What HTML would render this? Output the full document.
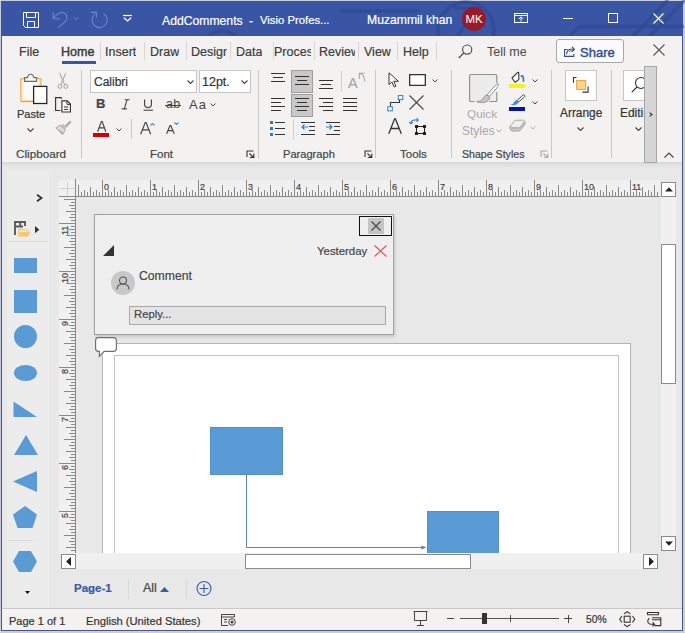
<!DOCTYPE html>
<html><head><meta charset="utf-8">
<style>
*{margin:0;padding:0;box-sizing:border-box}
html,body{width:685px;height:633px;overflow:hidden;background:#c9cde2}
body{font-family:"Liberation Sans",sans-serif;position:relative;color:#333}
.a{position:absolute}
.t{position:absolute;white-space:nowrap;line-height:1}
svg{position:absolute;overflow:visible}
.t,.gl{-webkit-text-stroke-width:0.2px}
.tab{position:absolute;top:45px;font-size:12.5px;color:#3c3c3c;-webkit-text-stroke:0.2px #3c3c3c;white-space:nowrap;overflow:hidden;line-height:14px}
.tsep{position:absolute;top:42px;width:1px;height:18px;background:#d6d6d6}
.gsep{position:absolute;top:70px;height:88px;width:1px;background:#c8c8c8}
.gl{position:absolute;top:148px;font-size:11.5px;color:#444;line-height:12px;white-space:nowrap}
</style></head>
<body>
<!-- window bg -->
<div class="a" style="left:1px;top:1px;width:682px;height:630px;background:#e8e8e8"></div>
<!-- TITLE BAR -->
<div class="a" style="left:1px;top:1px;width:682px;height:35px;background:#3955a3"></div>

<!-- title decorations (faint circuit) -->
<svg width="682" height="35" style="left:1px;top:1px" viewBox="1 1 682 35">
 <g fill="none" stroke="#2f4690" stroke-opacity="0.55" stroke-width="3.5">
  <circle cx="466" cy="30" r="28"/>
  <path d="M454 8 H476 L458 36"/>
  <path d="M340 11 H420"/>
  <path d="M570 36 L579 26.5 H684"/>
  <path d="M633 36 L668 0 M650 36 L685 0"/>
  <circle cx="222" cy="52" r="21"/>
 </g>
</svg>
<!-- save icon -->
<svg width="16" height="16" style="left:23px;top:12px" viewBox="0 0 16 16">
 <path d="M0.5 0.5 H15.5 V15.5 H2.5 L0.5 13.5 Z" fill="none" stroke="#fff" stroke-width="1"/>
 <path d="M3.5 0.5 V5.5 H12.5 V0.5" fill="none" stroke="#fff" stroke-width="1"/>
 <path d="M4.5 15.5 V9.5 H11.5 V15.5" fill="none" stroke="#fff" stroke-width="1"/>
</svg>
<!-- undo -->
<svg width="34" height="26" style="left:48px;top:6px" viewBox="0 0 34 26">
 <path d="M5.2 6 V12.7 H11.9" fill="none" stroke="#6f86cc" stroke-width="1.1"/>
 <path d="M5.8 12 C8.5 7.5 13 5.5 16.5 7 C19.5 8.5 19.5 12.5 17.5 15.5 L10.2 21.6" fill="none" stroke="#6f86cc" stroke-width="1.1"/>
 <path d="M25.8 11.4 L28.3 13.6 L30.8 11.4" fill="none" stroke="#6f86cc" stroke-width="1"/>
</svg>
<!-- redo -->
<svg width="30" height="26" style="left:85px;top:6px" viewBox="0 0 30 26">
 <path d="M18.4 7.4 A7.6 7.6 0 1 1 10.5 7.6" fill="none" stroke="#6f86cc" stroke-width="1.1"/>
 <path d="M6.1 6.4 H11.6 V11.6" fill="none" stroke="#6f86cc" stroke-width="1.1"/>
</svg>
<!-- customize qat -->
<svg width="9" height="7" style="left:123px;top:15px" viewBox="0 0 9 7">
 <path d="M0 0.5 H9" stroke="#fff" stroke-width="1.2"/>
 <path d="M0.8 2.8 L4.5 6 L8.2 2.8" fill="none" stroke="#fff" stroke-width="1.3"/>
</svg>
<div class="t" style="left:162px;top:15px;font-size:12.2px;color:#fff">AddComments</div><div class="t" style="left:249px;top:15px;font-size:12px;color:#fff">-</div><div class="t" style="left:260px;top:15px;font-size:11.3px;color:#fff">Visio Profes...</div>
<div class="t" style="left:367px;top:14px;font-size:12.2px;color:#fff">Muzammil khan</div>
<div class="a" style="left:462px;top:7px;width:24px;height:24px;border-radius:50%;background:#951b2c"></div>
<div class="t" style="left:463px;top:14px;font-size:11.5px;color:#fff;width:22px;text-align:center;-webkit-text-stroke-width:0">MK</div>
<!-- ribbon display options -->
<svg width="14" height="10" style="left:514px;top:13px" viewBox="0 0 14 10">
 <rect x="0.5" y="0.5" width="13" height="9" fill="none" stroke="#fff" stroke-width="1"/>
 <path d="M0.5 2.5 H13.5" stroke="#fff" stroke-width="1"/>
 <path d="M7 8.5 V4 M4.8 6 L7 3.8 L9.2 6" fill="none" stroke="#fff" stroke-width="1"/>
</svg>
<!-- min max close -->
<div class="a" style="left:563px;top:18px;width:10px;height:1px;background:#fff"></div>
<div class="a" style="left:608px;top:13px;width:10px;height:10px;border:1px solid #fff"></div>
<svg width="11" height="11" style="left:653px;top:13px" viewBox="0 0 11 11"><path d="M0.5 0.5 L10.5 10.5 M10.5 0.5 L0.5 10.5" stroke="#fff" stroke-width="1.1"/></svg>

<!-- RIBBON -->
<div class="a" style="left:2px;top:36px;width:680px;height:126px;background:#f3f2f1"></div>
<!-- ribbon shadow -->
<div class="a" style="left:2px;top:162px;width:680px;height:8px;background:linear-gradient(#d8d8d8,#e8e8e8 70%)"></div>

<!-- tabs -->
<div class="tab" style="left:19px">File</div>
<div class="tab" style="left:61px;width:35px;color:#3a3a3a;font-size:12.5px;-webkit-text-stroke:0.4px #3a3a3a">Home</div>
<div class="a" style="left:62px;top:61px;width:34px;height:3px;background:#3955a3"></div>
<div class="tsep" style="left:100px"></div>
<div class="tab" style="left:105px">Insert</div>
<div class="tsep" style="left:144px"></div>
<div class="tab" style="left:150px">Draw</div>
<div class="tsep" style="left:186px"></div>
<div class="tab" style="left:191px;width:36px">Design</div>
<div class="tsep" style="left:230px"></div>
<div class="tab" style="left:236px">Data</div>
<div class="tsep" style="left:273px"></div>
<div class="tab" style="left:274px;width:37px">Process</div>
<div class="tsep" style="left:314px"></div>
<div class="tab" style="left:319px;width:36px">Review</div>
<div class="tsep" style="left:358px"></div>
<div class="tab" style="left:364px">View</div>
<div class="tsep" style="left:397px"></div>
<div class="tab" style="left:403px">Help</div>
<div class="tsep" style="left:436px"></div>
<div class="tab" style="left:487px;color:#4a4a4a;-webkit-text-stroke-width:0">Tell me</div>


<!-- search / share / close -->
<svg width="15" height="15" style="left:458px;top:44px" viewBox="0 0 15 15">
 <circle cx="9.2" cy="5.6" r="4.6" fill="none" stroke="#444" stroke-width="1.1"/>
 <path d="M6 8.8 L0.8 14" stroke="#444" stroke-width="1.2"/>
</svg>
<div class="a" style="left:556px;top:39px;width:68px;height:24px;border:1px solid #a8a8a8;border-radius:3px;background:#fbfbfb"></div>
<svg width="12" height="12" style="left:564px;top:45px" viewBox="0 0 12 12"><path d="M3.5 4.5 H0.6 V11.4 H9.8 V9" fill="none" stroke="#2f4c8f" stroke-width="1.1"/><path d="M2.6 9.2 C2.8 6 4.8 4.3 7.6 4.3 H9.8 M8 1.8 L10.4 4.3 L8 6.8" fill="none" stroke="#2f4c8f" stroke-width="1.1"/><path d="M5 6.8 C5.8 6 7 5.8 9 5.8" fill="none" stroke="#2f4c8f" stroke-width="0.9"/></svg>
<div class="t" style="left:580px;top:46px;font-size:13px;color:#2f4c8f;-webkit-text-stroke-width:0.4px">Share</div>
<svg width="12" height="12" style="left:653px;top:44px" viewBox="0 0 12 12"><path d="M0.5 0.5 L11.5 11.5 M11.5 0.5 L0.5 11.5" stroke="#555" stroke-width="1.1"/></svg>

<!-- CLIPBOARD -->
<svg width="30" height="32" style="left:19px;top:73px" viewBox="0 0 30 32">
 <rect x="1.9" y="5.8" width="20" height="22.8" fill="#fbfaf8" stroke="#e3a23d" stroke-width="1.1"/>
 <rect x="3" y="6.9" width="17.8" height="20.6" fill="none" stroke="#fcd79a" stroke-width="1.1"/>
 <path d="M5.6 4.6 H8.6 C8.8 2.4 10 1.2 11.6 1.2 C13.2 1.2 14.5 2.4 14.8 4.6 H17.6 V8.4 H5.6 Z" fill="#fbfaf8" stroke="#6a6a6a" stroke-width="1.1"/>
 <rect x="14.6" y="13.4" width="13.2" height="17.1" fill="#fff" stroke="#222" stroke-width="1.25"/>
</svg>
<div class="t" style="left:17px;top:109px;font-size:11px;color:#333">Paste</div>
<svg width="7" height="4" style="left:27px;top:128px" viewBox="0 0 7 4"><path d="M0.5 0.5 L3.5 3.5 L6.5 0.5" fill="none" stroke="#444" stroke-width="1.1"/></svg>
<!-- scissors -->
<svg width="12" height="17" style="left:56px;top:72px" viewBox="0 0 12 17">
 <path d="M3.6 1 L8.6 12.6 M9.8 1 L4.8 12.6" stroke="#a8a8a8" stroke-width="1.1"/>
 <circle cx="4" cy="14.4" r="1.9" fill="none" stroke="#a8a8a8" stroke-width="1.1"/>
 <circle cx="9.8" cy="14.4" r="1.9" fill="none" stroke="#a8a8a8" stroke-width="1.1"/>
</svg>
<!-- copy -->
<svg width="18" height="17" style="left:54px;top:96px" viewBox="0 0 18 17">
 <path d="M6.5 14.5 H1.6 V1.6 H7 L8 2.6" fill="none" stroke="#333" stroke-width="1.15"/>
 <path d="M7.9 4.9 H13.2 L16.4 8.1 V16 H7.9 Z" fill="#fff" stroke="#333" stroke-width="1.15"/>
 <path d="M13 5 V8.4 H16.4" fill="none" stroke="#333" stroke-width="1"/>
 <path d="M10 11 H14.2 M10 13.4 H14.2" stroke="#333" stroke-width="1"/>
</svg>
<!-- format painter -->
<svg width="17" height="16" style="left:55px;top:120px" viewBox="0 0 17 16">
 <path d="M0.8 7.8 L5.5 5 L10.4 9.9 L7.6 14.6 Z" fill="#d9d9d9" stroke="#a8a8a8" stroke-width="1"/>
 <path d="M3 10 L8 12.5 M5 12.5 L8.5 12.8" stroke="#a8a8a8" stroke-width="0.8"/>
 <path d="M6.6 5.8 L9.6 8.8 L11 7.4 L8 4.4 Z" fill="#c8c8c8" stroke="#a8a8a8" stroke-width="0.9"/>
 <path d="M10.3 6 L14.6 1.7 C15.3 1 16.2 1.8 15.5 2.6 L11.2 6.9" fill="none" stroke="#a8a8a8" stroke-width="1.1"/>
</svg>

<!-- FONT -->
<div class="a" style="left:90px;top:70px;width:107px;height:23px;border:1px solid #c6c6c6;background:#fff"></div>
<div class="t" style="left:94px;top:76px;font-size:12px;color:#333">Calibri</div>
<svg width="7" height="4" style="left:187px;top:80px" viewBox="0 0 7 4"><path d="M0.5 0.5 L3.5 3.5 L6.5 0.5" fill="none" stroke="#444" stroke-width="1.1"/></svg>
<div class="a" style="left:199px;top:70px;width:52px;height:23px;border:1px solid #c6c6c6;background:#fff"></div>
<div class="t" style="left:202px;top:76px;font-size:12.5px;color:#333">12pt.</div>
<svg width="7" height="4" style="left:241px;top:80px" viewBox="0 0 7 4"><path d="M0.5 0.5 L3.5 3.5 L6.5 0.5" fill="none" stroke="#444" stroke-width="1.1"/></svg>
<div class="t" style="left:96px;top:97px;font-size:13px;font-weight:bold;color:#444">B</div>
<svg width="10" height="11" style="left:121px;top:99px" viewBox="0 0 10 11"><path d="M3.6 0.7 H8.6 M0.8 9.9 H5.8 M6.1 0.7 L3.3 9.9" fill="none" stroke="#444" stroke-width="1.1"/></svg>
<svg width="11" height="12" style="left:143px;top:99px" viewBox="0 0 11 12"><path d="M1.6 0.5 V5.6 C1.6 7.6 2.8 8.6 5 8.6 C7.2 8.6 8.4 7.6 8.4 5.6 V0.5" fill="none" stroke="#444" stroke-width="1.15"/><path d="M0.5 11.2 H10" stroke="#444" stroke-width="1.1"/></svg>
<div class="t" style="left:166px;top:98px;font-size:12.5px;color:#444;-webkit-text-stroke-width:0;letter-spacing:0.2px">ab</div><div class="a" style="left:165px;top:105px;width:16px;height:1px;background:#444"></div>
<div class="t" style="left:189px;top:98px;font-size:13px;color:#444;letter-spacing:1px;-webkit-text-stroke-width:0">Aa</div>
<svg width="6" height="4" style="left:210px;top:103px" viewBox="0 0 6 4"><path d="M0.5 0.5 L3 3 L5.5 0.5" fill="none" stroke="#444" stroke-width="1"/></svg>
<svg width="9.5" height="10.8" style="left:97px;top:121px" viewBox="0 0 9.5 10.8"><path d="M0.6 10.8 L4.35 0.5 H5.15 L8.9 10.8 M1.90 6.91 H7.60" fill="none" stroke="#444" stroke-width="1.15"/></svg>
<div class="a" style="left:93px;top:133px;width:16px;height:4px;background:#d00000"></div>
<svg width="6" height="4" style="left:116px;top:127.5px" viewBox="0 0 6 4"><path d="M0.5 0.5 L3 3 L5.5 0.5" fill="none" stroke="#444" stroke-width="1"/></svg>
<div class="a" style="left:131px;top:119px;width:1px;height:20px;background:#c8c8c8"></div>
<svg width="11.3" height="12.3" style="left:140px;top:121.5px" viewBox="0 0 11.3 12.3"><path d="M0.6 12.3 L5.25 0.5 H6.050000000000001 L10.700000000000001 12.3 M2.26 7.87 H9.04" fill="none" stroke="#444" stroke-width="1.15"/></svg>
<svg width="5" height="3" style="left:150px;top:122.5px" viewBox="0 0 5 3"><path d="M0.5 2.5 L2.5 0.5 L4.5 2.5" fill="none" stroke="#3d8fd1" stroke-width="1.1"/></svg>
<svg width="8.8" height="8.8" style="left:165.6px;top:125px" viewBox="0 0 8.8 8.8"><path d="M0.6 8.8 L4.0 0.5 H4.800000000000001 L8.200000000000001 8.8 M1.76 5.63 H7.04" fill="none" stroke="#444" stroke-width="1.15"/></svg>
<svg width="5" height="3" style="left:174px;top:122px" viewBox="0 0 5 3"><path d="M0.5 0.5 L2.5 2.5 L4.5 0.5" fill="none" stroke="#3d8fd1" stroke-width="1.1"/></svg>
<svg width="9" height="9" style="left:246px;top:150px" viewBox="0 0 9 9"><path d="M1 7 V1 H7.5" fill="none" stroke="#333" stroke-width="1.1"/><path d="M3.5 3.5 L7.5 7.5 M3.8 7.5 H7.8 V3.5" fill="none" stroke="#333" stroke-width="1.1"/></svg>


<!-- PARAGRAPH -->
<div class="a" style="left:291px;top:70px;width:22px;height:23px;border:1px solid #9e9e9e;background:#c8c8c8"></div><div class="a" style="left:291px;top:94px;width:22px;height:23px;border:1px solid #9e9e9e;background:#c8c8c8"></div><div class="a" style="left:271px;top:73px;width:14px;height:1px;background:#333"></div><div class="a" style="left:273px;top:77px;width:10px;height:1px;background:#333"></div><div class="a" style="left:271px;top:81px;width:14px;height:1px;background:#333"></div><div class="a" style="left:295px;top:76px;width:14px;height:1px;background:#333"></div><div class="a" style="left:297px;top:80px;width:10px;height:1px;background:#333"></div><div class="a" style="left:295px;top:84px;width:14px;height:1px;background:#333"></div><div class="a" style="left:319px;top:80px;width:14px;height:1px;background:#333"></div><div class="a" style="left:321px;top:84px;width:10px;height:1px;background:#333"></div><div class="a" style="left:319px;top:88px;width:14px;height:1px;background:#333"></div><div class="a" style="left:341px;top:71px;width:1px;height:21px;background:#cfcfcf"></div><div class="t" style="left:348px;top:76px;font-size:14.5px;color:#a6a6a6">A</div><svg width="8" height="10" style="left:358px;top:72px" viewBox="0 0 8 10"><path d="M1.3 6.8 V1.3 H6.8" fill="none" stroke="#a6a6a6" stroke-width="1.1"/><path d="M1.5 1.5 C4.5 2 6.5 4 6.8 9.7" fill="none" stroke="#a6a6a6" stroke-width="1.1"/></svg><div class="a" style="left:271px;top:98px;width:14px;height:1px;background:#333"></div><div class="a" style="left:271px;top:102px;width:10px;height:1px;background:#333"></div><div class="a" style="left:271px;top:106px;width:14px;height:1px;background:#333"></div><div class="a" style="left:271px;top:110px;width:10px;height:1px;background:#333"></div><div class="a" style="left:295px;top:98px;width:14px;height:1px;background:#333"></div><div class="a" style="left:297px;top:102px;width:10px;height:1px;background:#333"></div><div class="a" style="left:295px;top:106px;width:14px;height:1px;background:#333"></div><div class="a" style="left:297px;top:110px;width:10px;height:1px;background:#333"></div><div class="a" style="left:319px;top:98px;width:14px;height:1px;background:#333"></div><div class="a" style="left:323px;top:102px;width:10px;height:1px;background:#333"></div><div class="a" style="left:319px;top:106px;width:14px;height:1px;background:#333"></div><div class="a" style="left:323px;top:110px;width:10px;height:1px;background:#333"></div><div class="a" style="left:343px;top:98px;width:14px;height:1px;background:#333"></div><div class="a" style="left:343px;top:102px;width:14px;height:1px;background:#333"></div><div class="a" style="left:343px;top:106px;width:14px;height:1px;background:#333"></div><div class="a" style="left:343px;top:110px;width:14px;height:1px;background:#333"></div><div class="a" style="left:270px;top:121px;width:3px;height:3px;background:#2e7cc0"></div><div class="a" style="left:270px;top:127px;width:3px;height:3px;background:#2e7cc0"></div><div class="a" style="left:270px;top:133px;width:3px;height:3px;background:#2e7cc0"></div><div class="a" style="left:275px;top:122px;width:10px;height:1px;background:#333"></div><div class="a" style="left:275px;top:128px;width:10px;height:1px;background:#333"></div><div class="a" style="left:275px;top:134px;width:10px;height:1px;background:#333"></div><div class="a" style="left:293px;top:119px;width:1px;height:21px;background:#cfcfcf"></div><div class="a" style="left:301px;top:122px;width:14px;height:1px;background:#333"></div><div class="a" style="left:309px;top:126px;width:6px;height:1px;background:#333"></div><div class="a" style="left:309px;top:130px;width:6px;height:1px;background:#333"></div><div class="a" style="left:301px;top:134px;width:14px;height:1px;background:#333"></div><svg width="7" height="6" style="left:301px;top:124px" viewBox="0 0 7 6"><path d="M7 3 H1 M3.5 0.5 L1 3 L3.5 5.5" fill="none" stroke="#2e7cc0" stroke-width="1.1"/></svg><div class="a" style="left:326px;top:122px;width:14px;height:1px;background:#333"></div><div class="a" style="left:334px;top:126px;width:6px;height:1px;background:#333"></div><div class="a" style="left:334px;top:130px;width:6px;height:1px;background:#333"></div><div class="a" style="left:326px;top:134px;width:14px;height:1px;background:#333"></div><svg width="7" height="6" style="left:326px;top:124px" viewBox="0 0 7 6"><path d="M0 3 H6 M3.5 0.5 L6 3 L3.5 5.5" fill="none" stroke="#2e7cc0" stroke-width="1.1"/></svg><svg width="9" height="9" style="left:364px;top:150px" viewBox="0 0 9 9"><path d="M1 7 V1 H7.5" fill="none" stroke="#333" stroke-width="1.1"/><path d="M3.5 3.5 L7.5 7.5 M3.8 7.5 H7.8 V3.5" fill="none" stroke="#333" stroke-width="1.1"/></svg>
<!-- TOOLS -->
<svg width="12" height="16" style="left:388px;top:72px" viewBox="0 0 12 16"><path d="M1 0.8 V12.6 L3.9 10 L6.2 15 L7.9 14.2 L5.8 9.3 H10.4 Z" fill="#fff" stroke="#333" stroke-width="1" stroke-linejoin="miter"/></svg><div class="a" style="left:409px;top:74px;width:17px;height:12px;border:1px solid #333;background:#fff;box-shadow:inset 0 0 0 0.3px #333"></div><svg width="6" height="4" style="left:432px;top:79px" viewBox="0 0 6 4"><path d="M0.5 0.5 L3 3 L5.5 0.5" fill="none" stroke="#444" stroke-width="1"/></svg><svg width="17" height="16" style="left:387px;top:95px" viewBox="0 0 17 16"><path d="M3.5 11.5 V7.5 H12.5 V4.5" fill="none" stroke="#333" stroke-width="1.1"/><rect x="0.8" y="11.8" width="4.5" height="4" fill="#fff" stroke="#2e7cc0" stroke-width="1"/><rect x="11.3" y="0.6" width="4.5" height="4" fill="#fff" stroke="#2e7cc0" stroke-width="1"/></svg><svg width="15" height="15" style="left:409px;top:95px" viewBox="0 0 15 15"><path d="M0.5 0.5 L14.5 14.5 M14.5 0.5 L0.5 14.5" stroke="#444" stroke-width="1.1"/></svg><svg width="15" height="16" style="left:388px;top:118px" viewBox="0 0 15 16"><path d="M0.8 15.7 L6.6 0.8 H7.4 L13.3 15.7 M3 10.5 H11" fill="none" stroke="#333" stroke-width="1.3"/></svg><svg width="18" height="17" style="left:409px;top:118px" viewBox="0 0 18 17"><path d="M2 5.5 C2 3 3.5 2 6 2 H9" fill="none" stroke="#2e7cc0" stroke-width="1.1"/><path d="M7.5 0.3 L9.3 2 L7.5 3.7" fill="none" stroke="#2e7cc0" stroke-width="1.1"/><path d="M0.3 4 L2 5.8 L3.7 4" fill="none" stroke="#2e7cc0" stroke-width="1.1"/><rect x="7.5" y="8.5" width="8" height="7" fill="none" stroke="#222" stroke-width="1"/><rect x="6" y="7" width="3" height="3" fill="#222"/><rect x="14" y="7" width="3" height="3" fill="#222"/><rect x="6" y="14" width="3" height="3" fill="#222"/><rect x="14" y="14" width="3" height="3" fill="#222"/></svg>
<!-- SHAPE STYLES -->
<svg width="43" height="40" style="left:462px;top:68px" viewBox="0 0 43 40">
 <rect x="7.6" y="6.5" width="27.2" height="27" rx="1.3" fill="#ececec" stroke="#8e8e8e" stroke-width="1.15"/>
 <path d="M12.5 34.2 H27.5 M34.6 15 V24" stroke="#f3f2f1" stroke-width="2.6"/>
 <path d="M36.3 16.8 C36.8 16.3 36.5 15.6 35.8 15.8 C34.8 16.1 33.5 17.2 32 18.8 L25.3 26.7 L27.3 28.4 L34 21 C35.4 19.4 36 17.5 36.3 16.8 Z" fill="#fff" stroke="#8e8e8e" stroke-width="1"/>
 <path d="M25 27 C22.5 27.5 21.6 29.5 20.8 31 C20.2 32 19 33 14.5 33.6 C18 35.3 23.6 34.8 26 32.8 C27.2 31.8 27.8 30.2 27.6 29 Z" fill="#c6c6c6" stroke="#8e8e8e" stroke-width="0.9"/>
</svg><div class="t" style="left:467px;top:109px;font-size:11.8px;color:#a8a8a8;-webkit-text-stroke-width:0">Quick</div><div class="t" style="left:462px;top:125px;font-size:12px;color:#a8a8a8;-webkit-text-stroke-width:0">Styles</div><svg width="6" height="4" style="left:496px;top:129px" viewBox="0 0 6 4"><path d="M0.5 0.5 L3 3 L5.5 0.5" fill="none" stroke="#a6a6a6" stroke-width="1"/></svg><svg width="16" height="12" style="left:510px;top:71px" viewBox="0 0 16 12">
 <path d="M2 7 L7.2 1.8 C7.8 1.2 8.6 1.2 8.8 1.8 V8.6 L5 11.2 Z" fill="#fff" stroke="#333" stroke-width="1.1" stroke-linejoin="round"/>
 <path d="M10.9 5.6 C12.5 3.8 13.8 5.5 13.5 10.8" fill="none" stroke="#2e7cc0" stroke-width="1.7"/>
</svg><div class="a" style="left:509px;top:84px;width:16px;height:4px;background:#f7f01a"></div><svg width="6" height="4" style="left:532px;top:79px" viewBox="0 0 6 4"><path d="M0.5 0.5 L3 3 L5.5 0.5" fill="none" stroke="#444" stroke-width="1"/></svg><svg width="17" height="12" style="left:509px;top:94px" viewBox="0 0 17 12">
 <path d="M15.6 1.4 C16.2 2 15.8 2.6 15.4 3 L9.4 8 L8 6.6 L13.8 1.2 C14.3 0.8 15 0.8 15.6 1.4 Z" fill="#fff" stroke="#444" stroke-width="1"/>
 <path d="M8.3 6.2 C6.5 5.8 5.5 7.2 5 8.4 C4.5 9.5 3 10.6 1.2 10.8 C4.5 11.8 8.5 11 9.6 8.2 Z" fill="#3d8fd1"/>
</svg><div class="a" style="left:509px;top:107px;width:16px;height:4px;background:#0712a8"></div><svg width="6" height="4" style="left:532px;top:101px" viewBox="0 0 6 4"><path d="M0.5 0.5 L3 3 L5.5 0.5" fill="none" stroke="#444" stroke-width="1"/></svg><svg width="17" height="13" style="left:509px;top:119px" viewBox="0 0 17 13">
 <path d="M1 7.6 L6.2 1.2 H14.6 L15.8 2.6 L10.6 9 H2.4 Z" fill="#efefef" stroke="#a6a6a6" stroke-width="1"/>
 <path d="M1 7.6 V9.8 L2.4 12 H10.6 L15.8 5.6 V2.6 L10.6 9 H2.4 Z" fill="#c9c9c9" stroke="#a6a6a6" stroke-width="1"/>
</svg><svg width="6" height="4" style="left:530px;top:125.5px" viewBox="0 0 6 4"><path d="M0.5 0.5 L3 3 L5.5 0.5" fill="none" stroke="#b5b5b5" stroke-width="1"/></svg><svg width="9" height="9" style="left:540px;top:150px" viewBox="0 0 9 9"><path d="M1 7 V1 H7.5" fill="none" stroke="#a6a6a6" stroke-width="1.1"/><path d="M3.5 3.5 L7.5 7.5 M3.8 7.5 H7.8 V3.5" fill="none" stroke="#a6a6a6" stroke-width="1.1"/></svg>
<!-- ARRANGE / EDITING -->
<div class="a" style="left:565px;top:70px;width:32px;height:31px;border:1px solid #c6c6c6;background:#fff"></div><svg width="18" height="17" style="left:572px;top:76px" viewBox="0 0 18 17"><rect x="4.7" y="4.4" width="9" height="9" fill="#fcd48b" stroke="#e0a040" stroke-width="1"/><path d="M1.5 6.8 V1.5 H4.5 M10.4 16.1 H16.1 V10.4" fill="none" stroke="#333" stroke-width="1.1"/></svg><div class="t" style="left:560px;top:108px;font-size:11.9px;color:#333">Arrange</div><svg width="7" height="4" style="left:577px;top:127px" viewBox="0 0 7 4"><path d="M0.5 0.5 L3.5 3.5 L6.5 0.5" fill="none" stroke="#444" stroke-width="1.1"/></svg><div class="a" style="left:623px;top:70px;width:32px;height:31px;border:1px solid #c6c6c6;background:#fff"></div><svg width="16" height="16" style="left:631px;top:77px" viewBox="0 0 16 16"><circle cx="10" cy="6" r="5.5" fill="none" stroke="#333" stroke-width="1.1"/><path d="M6 10 L0.8 15.2" stroke="#333" stroke-width="1.2"/></svg><div class="t" style="left:620px;top:108px;font-size:11.9px;color:#333;width:24px;overflow:hidden">Editing</div><svg width="7" height="4" style="left:635px;top:127px" viewBox="0 0 7 4"><path d="M0.5 0.5 L3.5 3.5 L6.5 0.5" fill="none" stroke="#444" stroke-width="1.1"/></svg><div class="a" style="left:644px;top:66px;width:13px;height:97px;border:1px solid #a6a6a6;background:#d6d6d6"></div><svg width="4" height="5" style="left:649px;top:111.5px" viewBox="0 0 4 5"><path d="M0.6 0.6 L3 2.5 L0.6 4.4" fill="none" stroke="#333" stroke-width="1.1"/></svg><svg width="10" height="6" style="left:664px;top:152px" viewBox="0 0 10 6"><path d="M0.5 5.5 L5 1 L9.5 5.5" fill="none" stroke="#444" stroke-width="1.1"/></svg>
<!-- group separators -->
<div class="gsep" style="left:81px"></div>
<div class="gsep" style="left:258px"></div>
<div class="gsep" style="left:375px"></div>
<div class="gsep" style="left:451px"></div>
<div class="gsep" style="left:551px"></div>
<div class="gsep" style="left:611px"></div>

<!-- group labels -->
<div class="gl" style="left:16px;font-size:11.7px">Clipboard</div>
<div class="gl" style="left:150px">Font</div>
<div class="gl" style="left:283px;font-size:11.1px">Paragraph</div>
<div class="gl" style="left:400px">Tools</div>
<div class="gl" style="left:462px;font-size:10.6px">Shape Styles</div>


<!-- SHAPES PANEL -->
<div class="a" style="left:7px;top:170px;width:42px;height:438px;background:#ececec"></div><svg width="7" height="8" style="left:36px;top:194px" viewBox="0 0 7 8"><path d="M1 0.8 L5.5 4 L1 7.2" fill="none" stroke="#333" stroke-width="1.8"/></svg><svg width="18" height="17" style="left:14px;top:221px" viewBox="0 0 18 17">
 <path d="M1 14 V1 H11 V5 M1 5.5 H9 M6.2 1 V5.5" fill="none" stroke="#5a5a5a" stroke-width="1.9"/>
 <path d="M4.2 15.2 V8.5 C4.2 7.8 4.6 7.4 5.3 7.4 H7.8 L9 8.6 H13.5 C14.2 8.6 14.5 9 14.5 9.6 V11 H15.8 L14 15.5 H4.5 Z" fill="#f3c77b"/>
 <path d="M5.5 9.5 H13.5 V11.5 H5.5 Z" fill="#fcefd0"/>
 <path d="M4.6 15.5 L6.6 11.2 H16 L14 15.5 Z" fill="#f5c773"/>
</svg><svg width="5" height="8" style="left:35px;top:225.5px" viewBox="0 0 5 8"><path d="M0 0 L4.3 3.7 L0 7.3 Z" fill="#333"/></svg><div class="a" style="left:8px;top:241px;width:40px;height:1px;background:#dcdcdc"></div><div class="a" style="left:14px;top:258px;width:23px;height:15px;background:#5b9bd5"></div><div class="a" style="left:14px;top:290px;width:23px;height:23px;background:#5b9bd5"></div><div class="a" style="left:14px;top:325px;width:23px;height:23px;border-radius:50%;background:#5b9bd5"></div><div class="a" style="left:14px;top:365px;width:23px;height:16px;border-radius:50%;background:#5b9bd5"></div><svg width="24" height="16" style="left:13px;top:401px" viewBox="0 0 24 16"><path d="M0.5 0.5 L24 16 H0.5 Z" fill="#5b9bd5"/></svg><svg width="24" height="20" style="left:13.5px;top:435px" viewBox="0 0 24 20"><path d="M12 0 L24 20 H0 Z" fill="#5b9bd5"/></svg><svg width="24" height="21" style="left:13px;top:471px" viewBox="0 0 24 21"><path d="M0 10.5 L24 0 V21 Z" fill="#5b9bd5"/></svg><svg width="24" height="22" style="left:13px;top:506px" viewBox="0 0 24 22"><path d="M12 0 L24 8.5 L19.5 22 H4.5 L0 8.5 Z" fill="#5b9bd5"/></svg><div class="a" style="left:8px;top:540px;width:25px;height:1px;background:#dcdcdc"></div><svg width="24" height="21" style="left:13px;top:551px" viewBox="0 0 24 21"><path d="M6 0 H18 L24 10.5 L18 21 H6 L0 10.5 Z" fill="#5b9bd5"/></svg><svg width="5" height="3" style="left:25px;top:591px" viewBox="0 0 5 3"><path d="M0 0 H5 L2.5 3 Z" fill="#111"/></svg>
<!-- RULERS -->
<div class="a" style="left:59px;top:180px;width:601px;height:17px;background:#f0f0f0"></div><div class="a" style="left:59px;top:197px;width:17px;height:356px;background:#f0f0f0"></div><svg width="685" height="20" style="left:0;top:179px" viewBox="0 0 685 20"><g stroke="#8a8a8a" stroke-width="1"><path d="M78.5 6 V17"/><path d="M81.5 13 V17"/><path d="M84.5 11 V17"/><path d="M87.5 13 V17"/><path d="M90.5 8 V17"/><path d="M93.5 13 V17"/><path d="M96.5 11 V17"/><path d="M99.5 13 V17"/><path d="M102.5 1 V17"/><path d="M105.5 13 V17"/><path d="M108.5 11 V17"/><path d="M111.5 13 V17"/><path d="M114.5 8 V17"/><path d="M117.5 13 V17"/><path d="M120.5 11 V17"/><path d="M123.5 13 V17"/><path d="M126.5 6 V17"/><path d="M129.5 13 V17"/><path d="M132.5 11 V17"/><path d="M135.5 13 V17"/><path d="M138.5 8 V17"/><path d="M141.5 13 V17"/><path d="M144.5 11 V17"/><path d="M147.5 13 V17"/><path d="M150.5 1 V17"/><path d="M153.5 13 V17"/><path d="M156.5 11 V17"/><path d="M159.5 13 V17"/><path d="M162.5 8 V17"/><path d="M165.5 13 V17"/><path d="M168.5 11 V17"/><path d="M171.5 13 V17"/><path d="M174.5 6 V17"/><path d="M177.5 13 V17"/><path d="M180.5 11 V17"/><path d="M183.5 13 V17"/><path d="M186.5 8 V17"/><path d="M189.5 13 V17"/><path d="M192.5 11 V17"/><path d="M195.5 13 V17"/><path d="M198.5 1 V17"/><path d="M201.5 13 V17"/><path d="M204.5 11 V17"/><path d="M207.5 13 V17"/><path d="M210.5 8 V17"/><path d="M213.5 13 V17"/><path d="M216.5 11 V17"/><path d="M219.5 13 V17"/><path d="M222.5 6 V17"/><path d="M225.5 13 V17"/><path d="M228.5 11 V17"/><path d="M231.5 13 V17"/><path d="M234.5 8 V17"/><path d="M237.5 13 V17"/><path d="M240.5 11 V17"/><path d="M243.5 13 V17"/><path d="M246.5 1 V17"/><path d="M249.5 13 V17"/><path d="M252.5 11 V17"/><path d="M255.5 13 V17"/><path d="M258.5 8 V17"/><path d="M261.5 13 V17"/><path d="M264.5 11 V17"/><path d="M267.5 13 V17"/><path d="M270.5 6 V17"/><path d="M273.5 13 V17"/><path d="M276.5 11 V17"/><path d="M279.5 13 V17"/><path d="M282.5 8 V17"/><path d="M285.5 13 V17"/><path d="M288.5 11 V17"/><path d="M291.5 13 V17"/><path d="M294.5 1 V17"/><path d="M297.5 13 V17"/><path d="M300.5 11 V17"/><path d="M303.5 13 V17"/><path d="M306.5 8 V17"/><path d="M309.5 13 V17"/><path d="M312.5 11 V17"/><path d="M315.5 13 V17"/><path d="M318.5 6 V17"/><path d="M321.5 13 V17"/><path d="M324.5 11 V17"/><path d="M327.5 13 V17"/><path d="M330.5 8 V17"/><path d="M333.5 13 V17"/><path d="M336.5 11 V17"/><path d="M339.5 13 V17"/><path d="M342.5 1 V17"/><path d="M345.5 13 V17"/><path d="M348.5 11 V17"/><path d="M351.5 13 V17"/><path d="M354.5 8 V17"/><path d="M357.5 13 V17"/><path d="M360.5 11 V17"/><path d="M363.5 13 V17"/><path d="M366.5 6 V17"/><path d="M369.5 13 V17"/><path d="M372.5 11 V17"/><path d="M375.5 13 V17"/><path d="M378.5 8 V17"/><path d="M381.5 13 V17"/><path d="M384.5 11 V17"/><path d="M387.5 13 V17"/><path d="M390.5 1 V17"/><path d="M393.5 13 V17"/><path d="M396.5 11 V17"/><path d="M399.5 13 V17"/><path d="M402.5 8 V17"/><path d="M405.5 13 V17"/><path d="M408.5 11 V17"/><path d="M411.5 13 V17"/><path d="M414.5 6 V17"/><path d="M417.5 13 V17"/><path d="M420.5 11 V17"/><path d="M423.5 13 V17"/><path d="M426.5 8 V17"/><path d="M429.5 13 V17"/><path d="M432.5 11 V17"/><path d="M435.5 13 V17"/><path d="M438.5 1 V17"/><path d="M441.5 13 V17"/><path d="M444.5 11 V17"/><path d="M447.5 13 V17"/><path d="M450.5 8 V17"/><path d="M453.5 13 V17"/><path d="M456.5 11 V17"/><path d="M459.5 13 V17"/><path d="M462.5 6 V17"/><path d="M465.5 13 V17"/><path d="M468.5 11 V17"/><path d="M471.5 13 V17"/><path d="M474.5 8 V17"/><path d="M477.5 13 V17"/><path d="M480.5 11 V17"/><path d="M483.5 13 V17"/><path d="M486.5 1 V17"/><path d="M489.5 13 V17"/><path d="M492.5 11 V17"/><path d="M495.5 13 V17"/><path d="M498.5 8 V17"/><path d="M501.5 13 V17"/><path d="M504.5 11 V17"/><path d="M507.5 13 V17"/><path d="M510.5 6 V17"/><path d="M513.5 13 V17"/><path d="M516.5 11 V17"/><path d="M519.5 13 V17"/><path d="M522.5 8 V17"/><path d="M525.5 13 V17"/><path d="M528.5 11 V17"/><path d="M531.5 13 V17"/><path d="M534.5 1 V17"/><path d="M537.5 13 V17"/><path d="M540.5 11 V17"/><path d="M543.5 13 V17"/><path d="M546.5 8 V17"/><path d="M549.5 13 V17"/><path d="M552.5 11 V17"/><path d="M555.5 13 V17"/><path d="M558.5 6 V17"/><path d="M561.5 13 V17"/><path d="M564.5 11 V17"/><path d="M567.5 13 V17"/><path d="M570.5 8 V17"/><path d="M573.5 13 V17"/><path d="M576.5 11 V17"/><path d="M579.5 13 V17"/><path d="M582.5 1 V17"/><path d="M585.5 13 V17"/><path d="M588.5 11 V17"/><path d="M591.5 13 V17"/><path d="M594.5 8 V17"/><path d="M597.5 13 V17"/><path d="M600.5 11 V17"/><path d="M603.5 13 V17"/><path d="M606.5 6 V17"/><path d="M609.5 13 V17"/><path d="M612.5 11 V17"/><path d="M615.5 13 V17"/><path d="M618.5 8 V17"/><path d="M621.5 13 V17"/><path d="M624.5 11 V17"/><path d="M627.5 13 V17"/><path d="M630.5 1 V17"/><path d="M633.5 13 V17"/><path d="M636.5 11 V17"/><path d="M639.5 13 V17"/><path d="M642.5 8 V17"/><path d="M645.5 13 V17"/><path d="M648.5 11 V17"/><path d="M651.5 13 V17"/><path d="M654.5 6 V17"/><path d="M657.5 13 V17"/></g><path d="M59 17.5 H660" stroke="#8a8a8a" stroke-width="1"/><path d="M60 9.5 H74 M67.5 3 V16" stroke="#d0d0d0" stroke-width="1"/><path d="M75.5 0 V18" stroke="#8a8a8a"/></svg><div class="t" style="left:104px;top:183px;font-size:9px;color:#444">0</div><div class="t" style="left:152px;top:183px;font-size:9px;color:#444">1</div><div class="t" style="left:200px;top:183px;font-size:9px;color:#444">2</div><div class="t" style="left:248px;top:183px;font-size:9px;color:#444">3</div><div class="t" style="left:296px;top:183px;font-size:9px;color:#444">4</div><div class="t" style="left:344px;top:183px;font-size:9px;color:#444">5</div><div class="t" style="left:392px;top:183px;font-size:9px;color:#444">6</div><div class="t" style="left:440px;top:183px;font-size:9px;color:#444">7</div><div class="t" style="left:488px;top:183px;font-size:9px;color:#444">8</div><div class="t" style="left:536px;top:183px;font-size:9px;color:#444">9</div><div class="t" style="left:584px;top:183px;font-size:9px;color:#444">10</div><div class="t" style="left:632px;top:183px;font-size:9px;color:#444">11</div><svg width="20" height="685" style="left:59px;top:0" viewBox="0 0 20 685"><g stroke="#8a8a8a" stroke-width="1"><path d="M5 199.5 H16"/><path d="M12 202.5 H16"/><path d="M10 205.5 H16"/><path d="M12 208.5 H16"/><path d="M7 211.5 H16"/><path d="M12 214.5 H16"/><path d="M10 217.5 H16"/><path d="M12 220.5 H16"/><path d="M0 223.5 H16"/><path d="M12 226.5 H16"/><path d="M10 229.5 H16"/><path d="M12 232.5 H16"/><path d="M7 235.5 H16"/><path d="M12 238.5 H16"/><path d="M10 241.5 H16"/><path d="M12 244.5 H16"/><path d="M5 247.5 H16"/><path d="M12 250.5 H16"/><path d="M10 253.5 H16"/><path d="M12 256.5 H16"/><path d="M7 259.5 H16"/><path d="M12 262.5 H16"/><path d="M10 265.5 H16"/><path d="M12 268.5 H16"/><path d="M0 271.5 H16"/><path d="M12 274.5 H16"/><path d="M10 277.5 H16"/><path d="M12 280.5 H16"/><path d="M7 283.5 H16"/><path d="M12 286.5 H16"/><path d="M10 289.5 H16"/><path d="M12 292.5 H16"/><path d="M5 295.5 H16"/><path d="M12 298.5 H16"/><path d="M10 301.5 H16"/><path d="M12 304.5 H16"/><path d="M7 307.5 H16"/><path d="M12 310.5 H16"/><path d="M10 313.5 H16"/><path d="M12 316.5 H16"/><path d="M0 319.5 H16"/><path d="M12 322.5 H16"/><path d="M10 325.5 H16"/><path d="M12 328.5 H16"/><path d="M7 331.5 H16"/><path d="M12 334.5 H16"/><path d="M10 337.5 H16"/><path d="M12 340.5 H16"/><path d="M5 343.5 H16"/><path d="M12 346.5 H16"/><path d="M10 349.5 H16"/><path d="M12 352.5 H16"/><path d="M7 355.5 H16"/><path d="M12 358.5 H16"/><path d="M10 361.5 H16"/><path d="M12 364.5 H16"/><path d="M0 367.5 H16"/><path d="M12 370.5 H16"/><path d="M10 373.5 H16"/><path d="M12 376.5 H16"/><path d="M7 379.5 H16"/><path d="M12 382.5 H16"/><path d="M10 385.5 H16"/><path d="M12 388.5 H16"/><path d="M5 391.5 H16"/><path d="M12 394.5 H16"/><path d="M10 397.5 H16"/><path d="M12 400.5 H16"/><path d="M7 403.5 H16"/><path d="M12 406.5 H16"/><path d="M10 409.5 H16"/><path d="M12 412.5 H16"/><path d="M0 415.5 H16"/><path d="M12 418.5 H16"/><path d="M10 421.5 H16"/><path d="M12 424.5 H16"/><path d="M7 427.5 H16"/><path d="M12 430.5 H16"/><path d="M10 433.5 H16"/><path d="M12 436.5 H16"/><path d="M5 439.5 H16"/><path d="M12 442.5 H16"/><path d="M10 445.5 H16"/><path d="M12 448.5 H16"/><path d="M7 451.5 H16"/><path d="M12 454.5 H16"/><path d="M10 457.5 H16"/><path d="M12 460.5 H16"/><path d="M0 463.5 H16"/><path d="M12 466.5 H16"/><path d="M10 469.5 H16"/><path d="M12 472.5 H16"/><path d="M7 475.5 H16"/><path d="M12 478.5 H16"/><path d="M10 481.5 H16"/><path d="M12 484.5 H16"/><path d="M5 487.5 H16"/><path d="M12 490.5 H16"/><path d="M10 493.5 H16"/><path d="M12 496.5 H16"/><path d="M7 499.5 H16"/><path d="M12 502.5 H16"/><path d="M10 505.5 H16"/><path d="M12 508.5 H16"/><path d="M0 511.5 H16"/><path d="M12 514.5 H16"/><path d="M10 517.5 H16"/><path d="M12 520.5 H16"/><path d="M7 523.5 H16"/><path d="M12 526.5 H16"/><path d="M10 529.5 H16"/><path d="M12 532.5 H16"/><path d="M5 535.5 H16"/><path d="M12 538.5 H16"/><path d="M10 541.5 H16"/><path d="M12 544.5 H16"/><path d="M7 547.5 H16"/><path d="M12 550.5 H16"/></g><path d="M16.5 197 V553" stroke="#8a8a8a" stroke-width="1"/></svg><div class="t" style="left:61px;top:235px;font-size:9px;color:#444;transform-origin:0 0;transform:rotate(-90deg)">11</div><div class="t" style="left:61px;top:283px;font-size:9px;color:#444;transform-origin:0 0;transform:rotate(-90deg)">10</div><div class="t" style="left:61px;top:326px;font-size:9px;color:#444;transform-origin:0 0;transform:rotate(-90deg)">9</div><div class="t" style="left:61px;top:374px;font-size:9px;color:#444;transform-origin:0 0;transform:rotate(-90deg)">8</div><div class="t" style="left:61px;top:422px;font-size:9px;color:#444;transform-origin:0 0;transform:rotate(-90deg)">7</div><div class="t" style="left:61px;top:470px;font-size:9px;color:#444;transform-origin:0 0;transform:rotate(-90deg)">6</div><div class="t" style="left:61px;top:518px;font-size:9px;color:#444;transform-origin:0 0;transform:rotate(-90deg)">5</div>
<!-- PAGE -->
<div class="a" style="left:102px;top:343px;width:529px;height:210px;background:#fff;border:1px solid #b4b4b4;border-bottom:none"></div><div class="a" style="left:114px;top:355px;width:505px;height:198px;border:1px solid #c4c4c4;border-bottom:none"></div><div class="a" style="left:210px;top:427px;width:73px;height:48px;background:#5b9bd5;border:1px solid #5690cb"></div><div class="a" style="left:427px;top:511px;width:72px;height:42px;background:#5b9bd5;border:1px solid #5690cb;border-bottom:none"></div><svg width="685" height="633" style="left:0;top:0" viewBox="0 0 685 633"><path d="M246.5 475 V547.5 H423" fill="none" stroke="#5f86a3" stroke-width="1"/><path d="M421.3 545.4 L426.5 547.5 L421.3 549.6 Z" fill="#5f86a3"/></svg>
<!-- SCROLLBARS -->
<div class="a" style="left:661px;top:197px;width:15px;height:354px;background:#f0f0f0"></div><div class="a" style="left:661px;top:182px;width:15px;height:15px;border:1px solid #8a8a8a;background:#fff"></div><svg width="8" height="5" style="left:664.5px;top:187px" viewBox="0 0 8 5"><path d="M0 4.5 L4 0.3 L8 4.5 Z" fill="#222"/></svg><div class="a" style="left:661px;top:244px;width:15px;height:140px;border:1px solid #8a8a8a;background:#fff"></div><div class="a" style="left:661px;top:536px;width:15px;height:15px;border:1px solid #8a8a8a;background:#fff"></div><svg width="8" height="5" style="left:664.5px;top:541px" viewBox="0 0 8 5"><path d="M0 0.5 H8 L4 4.7 Z" fill="#222"/></svg><div class="a" style="left:61px;top:553px;width:597px;height:16px;background:#f0f0f0"></div><div class="a" style="left:61px;top:554px;width:15px;height:15px;border:1px solid #8a8a8a;background:#fff"></div><svg width="5" height="9" style="left:66px;top:557px" viewBox="0 0 5 9"><path d="M5 0 V9 L0 4.5 Z" fill="#222"/></svg><div class="a" style="left:245px;top:554px;width:226px;height:15px;border:1px solid #8a8a8a;background:#fff"></div><div class="a" style="left:643px;top:554px;width:15px;height:15px;border:1px solid #8a8a8a;background:#fff"></div><svg width="5" height="9" style="left:649px;top:557px" viewBox="0 0 5 9"><path d="M0 0 V9 L5 4.5 Z" fill="#222"/></svg>
<!-- PAGE TABS -->
<div class="t" style="left:74px;top:583px;font-size:11.5px;font-weight:bold;color:#3b5aa0">Page-1</div><div class="a" style="left:128px;top:578px;width:1px;height:21px;background:#d9d9d9"></div><div class="t" style="left:143px;top:582px;font-size:12.5px;color:#444">All</div><svg width="9" height="5" style="left:160px;top:587px" viewBox="0 0 9 5"><path d="M0 5 L4.5 0 L9 5 Z" fill="#3b5aa0"/></svg><div class="a" style="left:186px;top:578px;width:1px;height:21px;background:#d9d9d9"></div><svg width="16" height="16" style="left:196px;top:581px" viewBox="0 0 16 16"><circle cx="8" cy="7.5" r="7" fill="none" stroke="#3b5aa0" stroke-width="1.1"/><path d="M8 3 V12 M3.5 7.5 H12.5" stroke="#3b5aa0" stroke-width="1.1"/></svg>
<!-- STATUS BAR -->
<div class="a" style="left:2px;top:608px;width:680px;height:22px;background:#f3f2f1;border-top:1px solid #c8c8c8"></div><div class="t" style="left:9px;top:616px;font-size:11px;color:#333">Page 1 of 1</div><div class="t" style="left:86px;top:616px;font-size:11.2px;color:#333">English (United States)</div><svg width="15" height="12" style="left:221px;top:614px" viewBox="0 0 15 12"><path d="M0.5 0.5 H13.5 V3 M0.5 0.5 V11.5 H7 M0.5 3 H13.5 M3 5.5 H6 M3 8 H6" fill="none" stroke="#444" stroke-width="1"/><circle cx="11" cy="8" r="3.3" fill="none" stroke="#444" stroke-width="1"/><circle cx="11" cy="8" r="1.5" fill="#444"/></svg><svg width="15" height="15" style="left:413px;top:611px" viewBox="0 0 15 15"><path d="M0.5 0.5 H14.5 M1.5 0.5 V9.5 H13.5 V0.5 M7.5 9.5 V14.5 M4 14.5 H11" fill="none" stroke="#444" stroke-width="1"/></svg><div class="a" style="left:447px;top:618px;width:7px;height:1px;background:#444"></div><div class="a" style="left:460px;top:618px;width:99px;height:1px;background:#555"></div><div class="a" style="left:510px;top:615px;width:1px;height:7px;background:#555"></div><div class="a" style="left:482px;top:613px;width:5px;height:11px;background:#333"></div><div class="a" style="left:564px;top:618px;width:8px;height:1px;background:#444"></div><div class="a" style="left:567.5px;top:614.5px;width:1px;height:8px;background:#444"></div><div class="t" style="left:586px;top:615px;font-size:10.3px;color:#333">50%</div><svg width="17" height="17" style="left:618.5px;top:610.5px" viewBox="0 0 17 17"><rect x="5.2" y="5.2" width="6" height="6" fill="none" stroke="#333" stroke-width="1.1"/><path d="M5 2.9 L8.2 0.7 L11.4 2.9 M5 13.5 L8.2 15.7 L11.4 13.5 M2.9 5 L0.7 8.2 L2.9 11.4 M13.5 5 L15.7 8.2 L13.5 11.4" fill="none" stroke="#333" stroke-width="1.1"/></svg><svg width="16" height="16" style="left:646px;top:611px" viewBox="0 0 16 16"><path d="M1.5 3.8 V1.5 H12.5 V3.8 M1.5 3.8 H12.5" fill="none" stroke="#333" stroke-width="1.1"/><path d="M6 6.8 H14.8 V14.6 H8.5 M6 8.8 H14.8" fill="none" stroke="#333" stroke-width="1.1"/><path d="M3.5 7.2 C1.3 8.5 1 11.8 3.6 13 L8.2 13.4 M6.6 11.4 L8.6 13.4 L6.4 15.4" fill="none" stroke="#333" stroke-width="1.1"/></svg>
<!-- COMMENT POPUP -->
<div class="a" style="left:94px;top:214px;width:300px;height:121px;background:#efefef;border:1px solid #a0a0a0;box-shadow:1px 2px 3px rgba(0,0,0,0.15)"></div><div class="a" style="left:359px;top:216px;width:33px;height:20px;border:1px solid #111;background:#efefef"></div><div class="a" style="left:368px;top:218px;width:16px;height:16px;background:#c4c4c4"></div><svg width="10" height="10" style="left:371px;top:221px" viewBox="0 0 10 10"><path d="M0.5 0.5 L9.5 9.5 M9.5 0.5 L0.5 9.5" stroke="#444" stroke-width="1.1"/></svg><svg width="11" height="11" style="left:103px;top:245px" viewBox="0 0 11 11"><path d="M0 11 H11 V0 Z" fill="#333"/></svg><div class="t" style="left:317px;top:246px;font-size:11.4px;color:#444">Yesterday</div><svg width="13" height="12" style="left:374px;top:245px" viewBox="0 0 13 12"><path d="M0.5 0.5 L12.5 11.5 M12.5 0.5 L0.5 11.5" stroke="#e05252" stroke-width="1.15"/></svg><div class="a" style="left:111px;top:271px;width:24px;height:24px;border-radius:50%;background:#c8c8c8"></div><svg width="14" height="14" style="left:116px;top:276px" viewBox="0 0 14 14"><circle cx="7" cy="4.5" r="3.5" fill="none" stroke="#555" stroke-width="1.1"/><path d="M1 13.5 C1 9.5 3.5 8 7 8 C10.5 8 13 9.5 13 13.5" fill="none" stroke="#555" stroke-width="1.1"/></svg><div class="t" style="left:139px;top:270px;font-size:12.2px;color:#444">Comment</div><div class="a" style="left:129px;top:306px;width:257px;height:19px;border:1px solid #a8a8a8;background:#e4e4e4"></div><div class="t" style="left:134px;top:309px;font-size:11.3px;color:#444">Reply...</div><svg width="24" height="21" style="left:95px;top:337px" viewBox="0 0 24 21"><path d="M3.3 0.6 H18.5 C20.5 0.6 21.4 1.5 21.4 3.5 V11.5 C21.4 13.5 20.5 14.3 18.5 14.3 H9.2 L4.4 19.4 V14.3 H3.3 C1.5 14.3 0.6 13.5 0.6 11.5 V3.5 C0.6 1.5 1.5 0.6 3.3 0.6 Z" fill="#fff" stroke="#6e6e6e" stroke-width="1.15"/></svg>
<!-- window border -->
<div class="a" style="left:1px;top:36px;width:682px;height:595px;border:1px solid #4a5582;border-top:none"></div>
</body></html>
